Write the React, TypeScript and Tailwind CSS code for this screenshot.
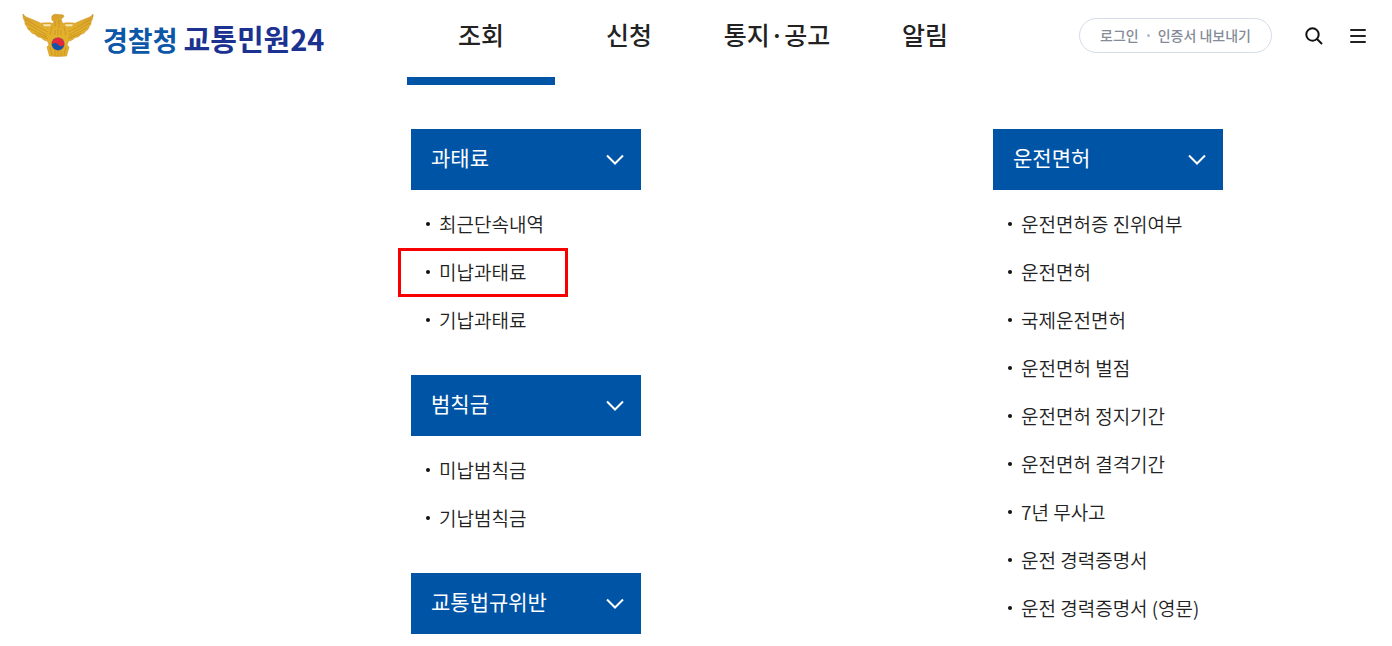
const font = "font-['Noto_Sans_CJK_KR','Noto_Sans',sans-serif]";

type Section = { title: string; items: string[] };

const navItems = ['조회', '신청', '통지·공고', '알림'];

const columns: Section[][] = [
  [
    { title: '과태료', items: ['최근단속내역', '미납과태료', '기납과태료'] },
    { title: '범칙금', items: ['미납범칙금', '기납범칙금'] },
    { title: '교통법규위반', items: [] },
  ],
  [
    {
      title: '운전면허',
      items: [
        '운전면허증 진위여부',
        '운전면허',
        '국제운전면허',
        '운전면허 벌점',
        '운전면허 정지기간',
        '운전면허 결격기간',
        '7년 무사고',
        '운전 경력증명서',
        '운전 경력증명서 (영문)',
      ],
    },
  ],
];

const highlighted = '미납과태료';

function Emblem() {
  return (
    <svg width="72" height="45" viewBox="0 0 72 45" aria-hidden="true">
      <defs>
        <linearGradient id="gold" x1="0" y1="0" x2="0" y2="1">
          <stop offset="0" stopColor="#d9a02c" />
          <stop offset="0.4" stopColor="#e3b12b" />
          <stop offset="1" stopColor="#e2ae27" />
        </linearGradient>
      </defs>
      <path
        d="M1 1C3 4 5 4.500 8 5.500L15 8.500C18 9.500 19 11 20 10L28 9.800L31 10.500L32 8L30 7.500L29.700 3.700C30.500 1.500 33 0.800 36 1.500L40 1.800C42 2 42.500 3.500 41 4.700L39 5.500L40 9L41 10.500L44 9.800L52 10C53 11 54 9.500 57 8.500L64 5.500C67 4.500 69 4 71 1C71.500 4 70 7 69 9C69.500 11 68 13 67 13.500C67 16 65 17.500 64 17.500C63 20 61 21 59 21C58 23.500 55 24.500 53 24.500C51 27 48 28 46.500 28L45 32L47 34L44.500 43L36 43.500L27.500 43L25 34L27 32L25.500 28C24 28 21 27 19 24.500C17 24.500 14 23.500 13 21C11 21 9 20 8 17.500C7 17.500 5 16 5 13.500C4 13 2.500 11 3 9C2 7 0.500 4 1 1Z"
        fill="url(#gold)"
        stroke="#cf972c"
        strokeWidth="0.6"
      />
      <path d="M21 11.200L29 11.200L28 13.200L22 13.200ZM51 11.200L43 11.200L44 13.200L50 13.200Z" fill="#f6e7bd" />
      <path
        d="M3 6C8 9 13 12 18 15L26 19M4 10C10 13 16 17 25 22M7 15C13 18 18 21 25 24M12 20C17 22 21 24 26 26M69 6C64 9 59 12 54 15L46 19M68 10C62 13 56 17 47 22M65 15C59 18 54 21 47 24M60 20C55 22 51 24 46 26M33 8V14M37 7V15M30 14L28 22M42 14L44 22M36 16V22M33 17V22M39 17V22M28 34L30 42M44 34L42 42M36 38V43M33 38V43M39 38V43"
        fill="none"
        stroke="#bd8722"
        strokeWidth="0.7"
        opacity="0.85"
      />
      <circle cx="36" cy="31" r="6.800" fill="#b98646" />
      <circle cx="36" cy="31" r="6.200" fill="#0f55a8" />
      <path d="M29.800 31.500A6.200 6.200 0 0 1 42.200 30.500C42 34 37.500 34 36 31.500C34.500 29.500 31 29.500 29.800 31.500Z" fill="#e5293a" />
    </svg>
  );
}

function MenuSection({ title, items }: Section) {
  return (
    <section>
      <button
        type="button"
        aria-expanded={items.length > 0}
        className="flex h-[61px] w-full items-center justify-between bg-[#0054a6] pr-[17px] pl-5 text-[21px] text-white"
      >
        <span className="pb-1">{title}</span>
        <svg width="18" height="12" viewBox="0 0 18 12" fill="none" stroke="currentColor" strokeWidth="2" aria-hidden="true">
          <path d="M1 1.500L9 9.500L17 1.500" />
        </svg>
      </button>
      {items.length > 0 && (
        <ul className="pt-2.5 pb-px">
          {items.map((item) => (
            <li key={item} className="relative flex h-12 items-center gap-[9px] pl-[15px]">
              <span className="size-1 shrink-0 rounded-full bg-[#111]" />
              <a href="#" className="text-[19px] font-[350] whitespace-nowrap text-[#222]">
                {item}
              </a>
              {item === highlighted && (
                <span className="pointer-events-none absolute top-0 -left-[13px] h-[49px] w-[170px] border-3 border-[#f90000]" />
              )}
            </li>
          ))}
        </ul>
      )}
    </section>
  );
}

export default function App() {
  return (
    <div className={`bg-white text-[#222] ${font}`}>
      <header className="flex h-[85px] items-start">
        <div className="w-[407px] shrink-0 pt-[13px] pl-[22px]">
          <a href="#" className="flex items-start gap-[9px] leading-[45px] font-bold whitespace-nowrap">
            <Emblem />
            <span className="flex items-baseline gap-1.5 pt-[3px]">
              <span className="text-[27px] text-[#0d57a8]">경찰청</span>
              <span className="text-[29px] text-[#1c3290]">교통민원24</span>
            </span>
          </a>
        </div>
        <nav className="flex h-full">
          {navItems.map((item, i) => (
            <a
              key={item}
              href="#"
              className={`flex w-[148px] justify-center border-b-8 pt-[15px] text-[25px] leading-[38px] font-medium ${
                i === 0 ? 'border-[#0054a6]' : 'border-transparent'
              }`}
            >
              {item}
            </a>
          ))}
        </nav>
        <div className="ml-auto flex items-center pt-[18px] pr-[26px]">
          <div className="flex h-[35px] items-center rounded-full border border-[#d5dce8] px-5 text-[14px] font-medium whitespace-nowrap text-[#858b98]">
            <a href="#">로그인</a>
            <span className="mx-2 size-[3px] rounded-full bg-[#b3bccb]" />
            <a href="#">인증서 내보내기</a>
          </div>
          <button type="button" aria-label="검색" className="ml-[33px]">
            <svg width="18" height="18" viewBox="0 0 18 18" fill="none" stroke="#111" strokeWidth="2" aria-hidden="true">
              <circle cx="7.500" cy="7.500" r="6.200" />
              <path d="M12 12L17 17" />
            </svg>
          </button>
          <button type="button" aria-label="전체메뉴" className="ml-[27px]">
            <svg width="16" height="16" viewBox="0 0 16 16" fill="none" stroke="#222" strokeWidth="2" aria-hidden="true">
              <path d="M1 2H15M1 8H15M1 14H15" strokeLinecap="round" />
            </svg>
          </button>
        </div>
      </header>
      <main className="flex gap-[352px] pt-11 pl-[411px]">
        {columns.map((sections) => (
          <div key={sections[0].title} className="flex w-[230px] flex-col gap-[30px]">
            {sections.map((section) => (
              <MenuSection key={section.title} {...section} />
            ))}
          </div>
        ))}
      </main>
    </div>
  );
}
